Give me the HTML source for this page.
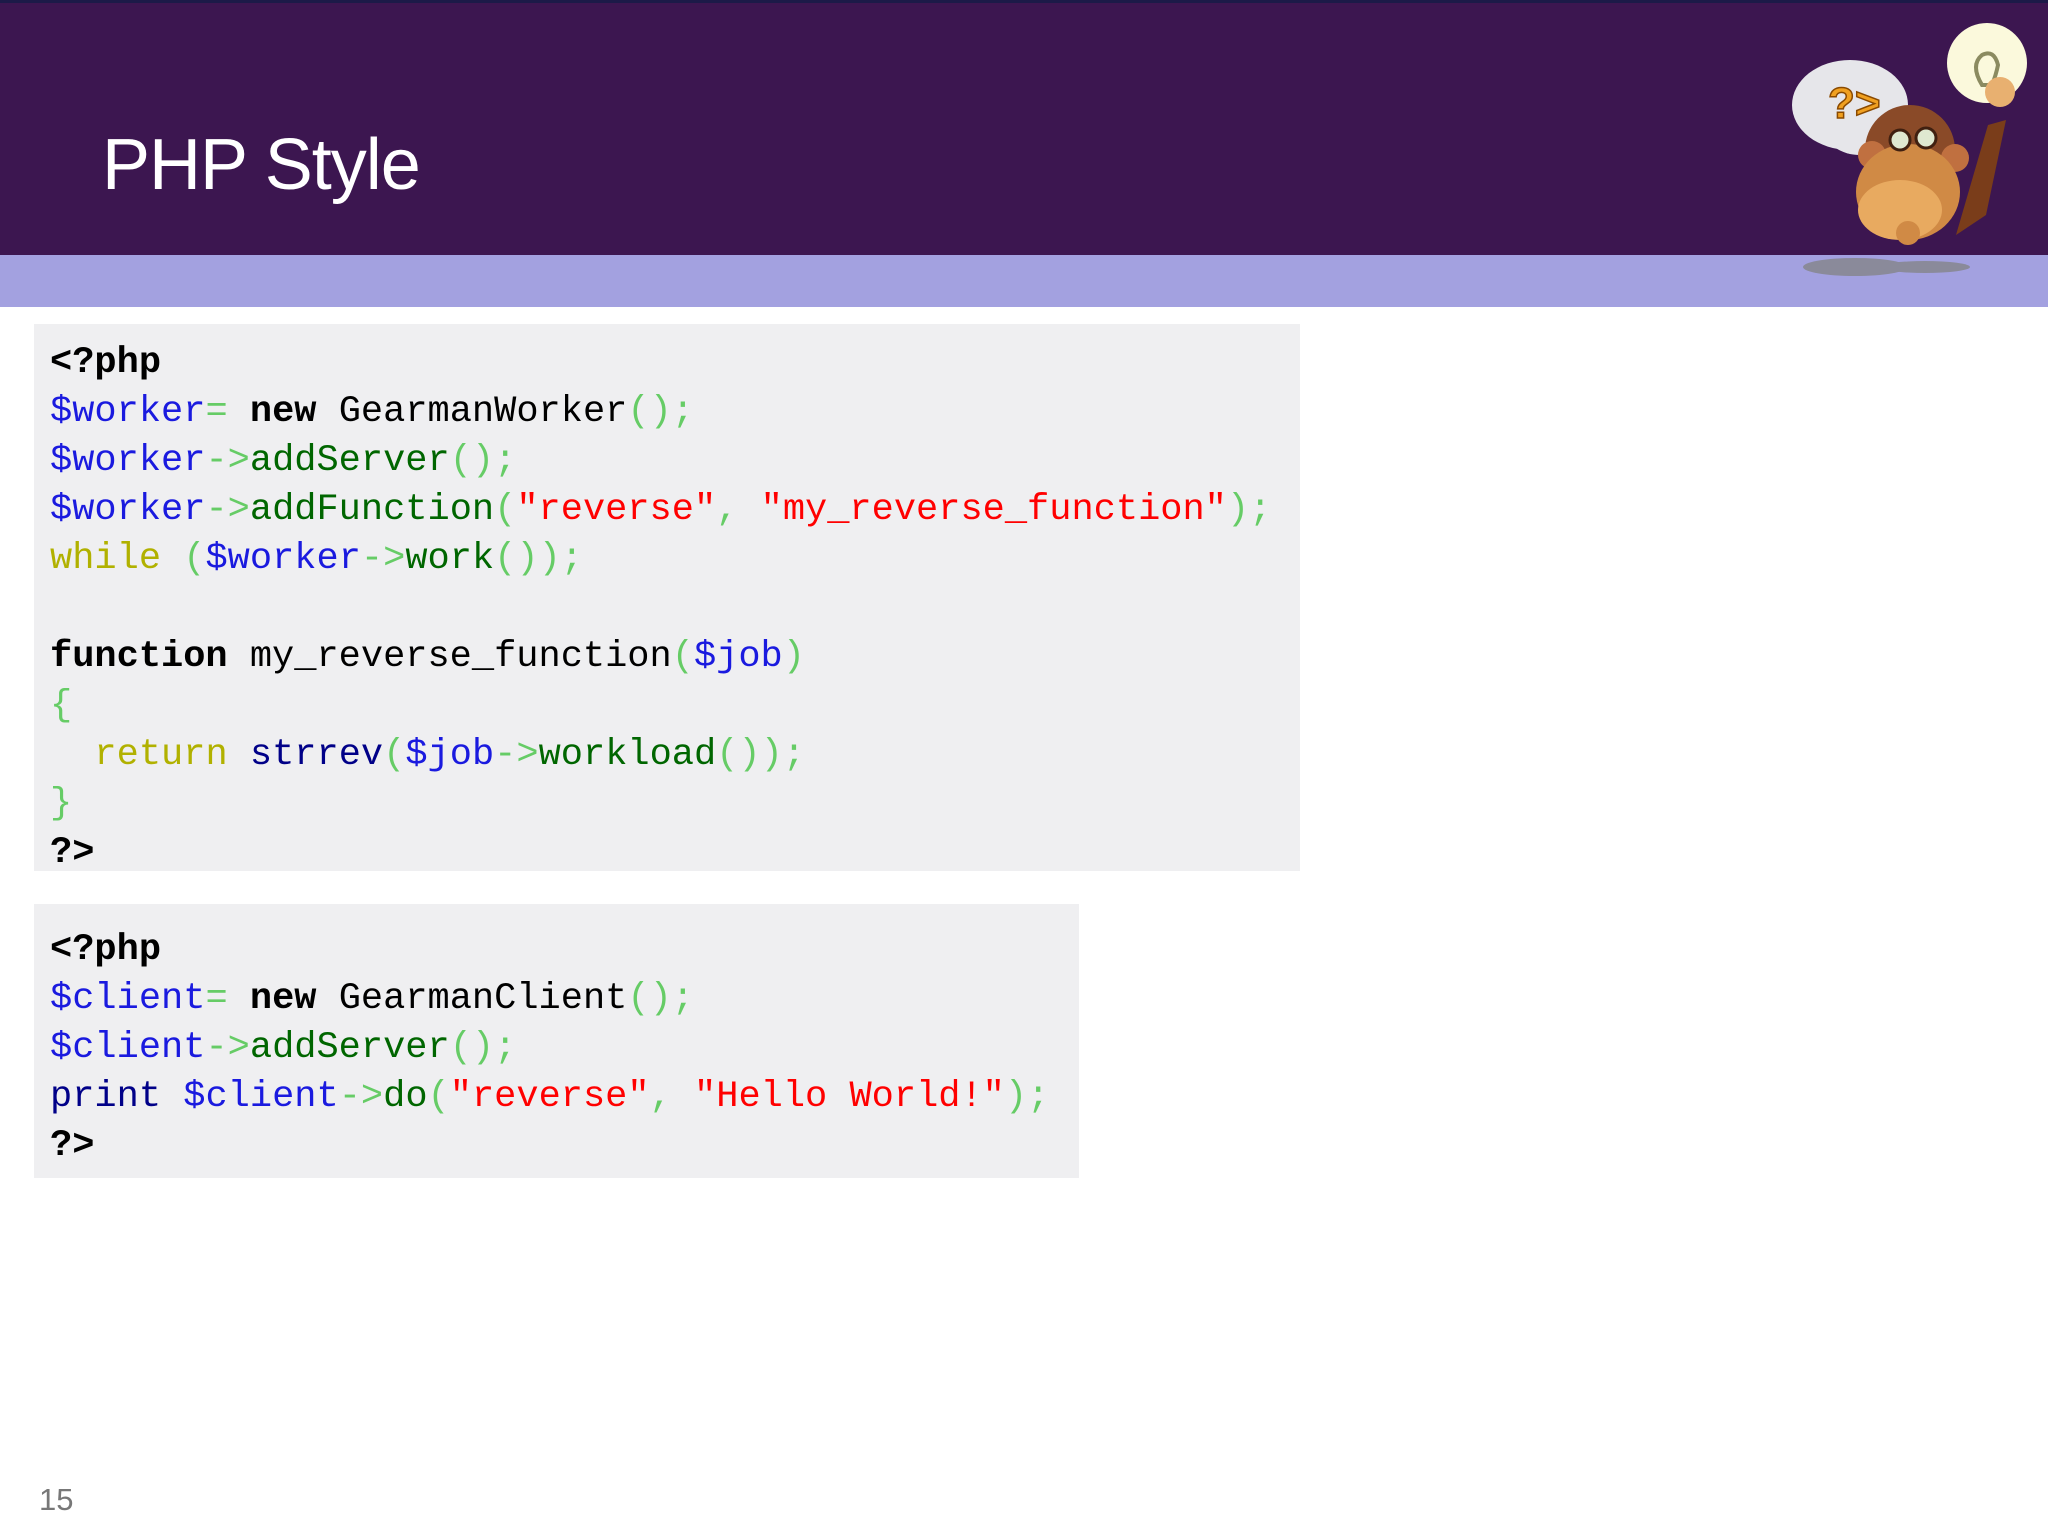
<!DOCTYPE html>
<html><head><meta charset="utf-8"><style>
body{margin:0;width:2048px;height:1536px;background:#fff;position:relative;overflow:hidden;font-family:"Liberation Sans",sans-serif}
#hd{position:absolute;left:0;top:0;width:2048px;height:255px;background:#3c1650;border-top:3px solid #1c1a48;box-sizing:border-box}
#band{position:absolute;left:0;top:255px;width:2048px;height:52px;background:#a3a1e0}
#title{position:absolute;left:102px;top:120px;font-size:72px;letter-spacing:-1px;color:#fff;line-height:90px}
pre{position:absolute;left:34px;margin:0;background:#efeff1;font-family:"Liberation Mono",monospace;font-size:37px;line-height:49px;padding-left:16px;box-sizing:border-box;color:#000}
#c1{top:324px;width:1266px;height:547px;padding-top:15px}
#c2{top:904px;width:1045px;height:274px;padding-top:22px}
.b{color:#1a1adf}.p{color:#66cc66}.g{color:#006600}.r{color:#ff0000}.y{color:#b1b100}.k{font-weight:bold;color:#000}.n{color:#000088}
#pg{position:absolute;left:39px;top:1482px;font-size:31px;color:#777}
</style></head><body>
<div id="hd"></div><div id="band"></div>
<div id="title">PHP Style</div>
<svg style="position:absolute;left:1760px;top:0" width="288" height="300">
<ellipse cx="95" cy="267" rx="52" ry="9" fill="#8a8a9a"/><ellipse cx="165" cy="267" rx="45" ry="6" fill="#8a8a9a"/>
<circle cx="227" cy="63" r="40" fill="#fbf9dc"/>
<path d="M222 85 q-12-20 0-30 q12-6 16 10 q-2 10-6 20z" fill="none" stroke="#8b8b60" stroke-width="4"/>
<ellipse cx="90" cy="105" rx="58" ry="45" fill="#e6e6ea"/><ellipse cx="100" cy="130" rx="35" ry="25" fill="#e6e6ea"/>
<text x="68" y="118" font-family="Liberation Sans" font-weight="bold" font-size="44" fill="#f0a020" stroke="#8a4a00" stroke-width="1.5">?&gt;</text>
<path d="M228 125 l18 -5 l-20 95 l-30 20z" fill="#7a3d1a"/>
<circle cx="240" cy="92" r="15" fill="#e8b070"/>
<circle cx="150" cy="150" r="45" fill="#8a4a28"/>
<circle cx="112" cy="155" r="14" fill="#c07040"/><circle cx="195" cy="158" r="14" fill="#c07040"/>
<ellipse cx="148" cy="192" rx="52" ry="48" fill="#d08a45"/>
<ellipse cx="140" cy="210" rx="42" ry="30" fill="#e8aa60"/>
<circle cx="140" cy="140" r="10" fill="#dfe8d0" stroke="#402010" stroke-width="3"/><circle cx="166" cy="138" r="10" fill="#dfe8d0" stroke="#402010" stroke-width="3"/>
<circle cx="148" cy="233" r="12" fill="#d08a45"/>
</svg>
<pre id="c1"><span class="k">&lt;?php</span>
<span class="b">$worker</span><span class="p">=</span> <span class="k">new</span> GearmanWorker<span class="p">();</span>
<span class="b">$worker</span><span class="p">-&gt;</span><span class="g">addServer</span><span class="p">();</span>
<span class="b">$worker</span><span class="p">-&gt;</span><span class="g">addFunction</span><span class="p">(</span><span class="r">"reverse"</span><span class="p">,</span> <span class="r">"my_reverse_function"</span><span class="p">);</span>
<span class="y">while</span> <span class="p">(</span><span class="b">$worker</span><span class="p">-&gt;</span><span class="g">work</span><span class="p">());</span>

<span class="k">function</span> my_reverse_function<span class="p">(</span><span class="b">$job</span><span class="p">)</span>
<span class="p">{</span>
  <span class="y">return</span> <span class="n">strrev</span><span class="p">(</span><span class="b">$job</span><span class="p">-&gt;</span><span class="g">workload</span><span class="p">());</span>
<span class="p">}</span>
<span class="k">?&gt;</span></pre>
<pre id="c2"><span class="k">&lt;?php</span>
<span class="b">$client</span><span class="p">=</span> <span class="k">new</span> GearmanClient<span class="p">();</span>
<span class="b">$client</span><span class="p">-&gt;</span><span class="g">addServer</span><span class="p">();</span>
<span class="n">print</span> <span class="b">$client</span><span class="p">-&gt;</span><span class="g">do</span><span class="p">(</span><span class="r">"reverse"</span><span class="p">,</span> <span class="r">"Hello World!"</span><span class="p">);</span>
<span class="k">?&gt;</span></pre>
<div id="pg">15</div>
</body></html>
